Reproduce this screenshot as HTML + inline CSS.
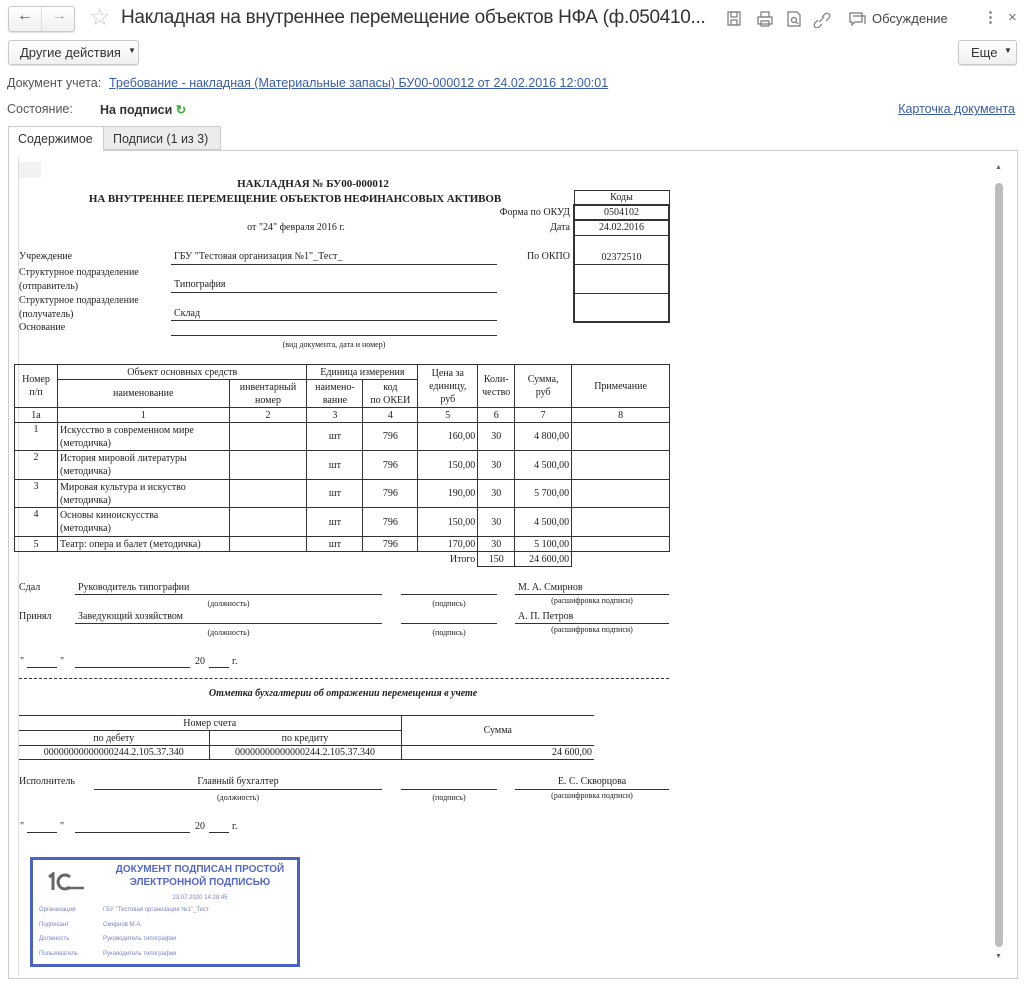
<!DOCTYPE html>
<html><head><meta charset="utf-8"><style>
*{margin:0;padding:0;box-sizing:border-box}
body{width:1024px;height:987px;background:#fff;position:relative;overflow:hidden;font-family:"Liberation Sans",sans-serif;color:#333}
.a{position:absolute;white-space:nowrap}
.s{font-family:"Liberation Serif",serif;font-size:10px;color:#222}
.l{position:absolute;height:0;border-top:1px solid #333}
.btn{position:absolute;border:1px solid #c8c8c8;border-radius:3px;background:linear-gradient(#fff,#f0f0f0);box-shadow:0 1px 1px rgba(0,0,0,.12);font-size:13px;color:#333}
table{border-collapse:collapse;position:absolute;font-family:"Liberation Serif",serif;font-size:10px;color:#222}
td{border:1px solid #333;text-align:center;vertical-align:middle;padding:0 2px;line-height:13px}
.r{text-align:right}.lf{text-align:left}
.cap{font-size:8px;text-align:center}
.st{position:absolute;font-size:6px;color:#7c86c8}
</style></head><body>
<!-- top bar -->
<div class="btn" style="left:8px;top:6px;width:67px;height:26px"></div>
<div class="a" style="left:41px;top:7px;height:24px;border-left:1px solid #ddd"></div>
<div class="a" style="left:17px;top:7px;font-size:16px;color:#555">&#8592;</div>
<div class="a" style="left:51px;top:7px;font-size:16px;color:#aaa">&#8594;</div>
<div class="a" style="left:89px;top:3px;font-size:24px;color:#ccc">&#9734;</div>
<div class="a" style="left:121px;top:7px;font-size:19px;color:#333;letter-spacing:-0.3px">Накладная на внутреннее перемещение объектов НФА (ф.050410...</div>
<svg class="a" style="left:726px;top:10px" width="150" height="18" fill="none" stroke="#777" stroke-width="1.2">
<rect x="2" y="2" width="12" height="13"/><rect x="5" y="2" width="6" height="5"/><rect x="5" y="10" width="6" height="5"/>
<rect x="32" y="7" width="14" height="7"/><rect x="35" y="2" width="8" height="5"/><rect x="35" y="11" width="8" height="5"/>
<path d="M62 2h9l3 3v11H62z"/><circle cx="68" cy="10" r="2.5"/><path d="M70 12l2 2"/>
<path d="M92 10l-3 3a2.5 2.5 0 0 0 4 4l3-3M96 7l3-3a2.5 2.5 0 0 1 4 4l-3 3M93 12l5-5"/>
<path d="M124 3h12v9h-7l-3 3v-3h-2z"/><path d="M127 6h12v8"/>
</svg>
<div class="a" style="left:872px;top:11px;font-size:13px;color:#444">Обсуждение</div>
<div class="a" style="left:983px;top:8px;font-size:15px;color:#777;font-weight:bold">&#8942;</div>
<div class="a" style="left:1008px;top:9px;font-size:15px;color:#777">×</div>
<!-- row 2 -->
<div class="btn" style="left:8px;top:40px;width:131px;height:25px"><span class="a" style="left:11px;top:4px">Другие действия</span><span class="a" style="left:119px;top:5px;font-size:8px">&#9660;</span></div>
<div class="btn" style="left:958px;top:40px;width:59px;height:25px"><span class="a" style="left:12px;top:4px">Еще</span><span class="a" style="left:45px;top:5px;font-size:8px">&#9660;</span></div>
<div class="a" style="left:7px;top:76px;font-size:12.5px;color:#555">Документ учета:</div>
<div class="a" style="left:109px;top:76px;font-size:12.5px;color:#3a5ea8;text-decoration:underline">Требование - накладная (Материальные запасы) БУ00-000012 от 24.02.2016 12:00:01</div>
<div class="a" style="left:7px;top:102px;font-size:12.5px;color:#555">Состояние:</div>
<div class="a" style="left:100px;top:102px;font-size:12.5px;color:#333;font-weight:bold">На подписи <span style="color:#3aa33a">&#8635;</span></div>
<div class="a" style="right:9px;top:102px;font-size:12.5px;color:#3a5ea8;text-decoration:underline">Карточка документа</div>
<!-- tabs -->
<div class="a" style="left:8px;top:126px;width:96px;height:25px;border:1px solid #ccc;border-bottom:none;background:#fff;z-index:2;font-size:12.5px;padding:5px 0 0 9px">Содержимое</div>
<div class="a" style="left:103px;top:126px;width:118px;height:24px;border:1px solid #ccc;background:#ececec;font-size:12.5px;padding:5px 0 0 9px">Подписи (1 из 3)</div>
<div class="a" style="left:8px;top:150px;width:1010px;height:829px;border:1px solid #ccc"></div>
<div class="a" style="left:18px;top:157px;width:1px;height:819px;background:#ddd"></div>
<div class="a" style="left:19px;top:162px;width:22px;height:16px;background:#f2f2f2"></div>
<!-- scrollbar -->
<div class="a" style="left:995px;top:183px;width:8px;height:764px;background:#bdbdbd;border-radius:4px"></div>
<div class="a" style="left:995px;top:164px;font-size:7px;color:#666">&#9650;</div>
<div class="a" style="left:995px;top:953px;font-size:7px;color:#666">&#9660;</div>

<!-- doc header -->
<div class="a s" style="left:0;width:626px;text-align:center;top:178px;font-weight:bold;font-size:11px">НАКЛАДНАЯ № БУ00-000012</div>
<div class="a s" style="left:0;width:590px;text-align:center;top:193px;font-weight:bold;font-size:11px;letter-spacing:-0.1px">НА ВНУТРЕННЕЕ ПЕРЕМЕЩЕНИЕ ОБЪЕКТОВ НЕФИНАНСОВЫХ АКТИВОВ</div>
<div class="a s" style="left:0;width:592px;text-align:center;top:222px">от "24" февраля 2016 г.</div>
<div class="a s" style="left:400px;width:170px;text-align:right;top:207px">Форма по ОКУД</div>
<div class="a s" style="left:400px;width:170px;text-align:right;top:222px">Дата</div>
<div class="a s" style="left:400px;width:170px;text-align:right;top:251px">По ОКПО</div>
<table style="left:573px;top:190px;width:97px">
<tr><td style="height:14px;border:1px solid #333">Коды</td></tr>
<tr><td style="height:15px;border:2px solid #333">0504102</td></tr>
<tr><td style="height:15px;border-left:2px solid #333;border-right:2px solid #333">24.02.2016</td></tr>
<tr><td style="height:29px;border-left:2px solid #333;border-right:2px solid #333;vertical-align:bottom">02372510</td></tr>
<tr><td style="height:29px;border-left:2px solid #333;border-right:2px solid #333"></td></tr>
<tr><td style="height:29px;border:2px solid #333;border-top:1px solid #333"></td></tr>
</table>
<div class="a s" style="left:19px;top:251px">Учреждение</div>
<div class="a s" style="left:19px;top:266px;line-height:14px">Структурное подразделение<br>(отправитель)</div>
<div class="a s" style="left:19px;top:294px;line-height:14px">Структурное подразделение<br>(получатель)</div>
<div class="a s" style="left:19px;top:322px">Основание</div>
<div class="a s" style="left:174px;top:251px">ГБУ "Тестовая организация №1"_Тест_</div>
<div class="a s" style="left:174px;top:279px">Типография</div>
<div class="a s" style="left:174px;top:308px">Склад</div>
<div class="l" style="left:171px;width:326px;top:264px"></div>
<div class="l" style="left:171px;width:326px;top:292px"></div>
<div class="l" style="left:171px;width:326px;top:320px"></div>
<div class="l" style="left:171px;width:326px;top:335px"></div>
<div class="a s" style="left:171px;width:326px;text-align:center;top:340px;font-size:8px">(вид документа, дата и номер)</div>

<table style="left:14px;top:364px;width:656px">
<col style="width:43px"><col style="width:172px"><col style="width:78px"><col style="width:56px"><col style="width:55px"><col style="width:60px"><col style="width:37px"><col style="width:57px"><col style="width:98px">
<tr style="height:15px"><td rowspan="2">Номер<br>п/п</td><td colspan="2">Объект основных средств</td><td colspan="2">Единица измерения</td><td rowspan="2">Цена за<br>единицу,<br>руб</td><td rowspan="2">Коли-<br>чество</td><td rowspan="2">Сумма,<br>руб</td><td rowspan="2">Примечание</td></tr>
<tr style="height:28px"><td>наименование</td><td>инвентарный<br>номер</td><td>наимено-<br>вание</td><td>код<br>по ОКЕИ</td></tr>
<tr style="height:15px"><td>1а</td><td>1</td><td>2</td><td>3</td><td>4</td><td>5</td><td>6</td><td>7</td><td>8</td></tr>
<tr style="height:28px"><td style="vertical-align:top">1</td><td class="lf">Искусство в современном мире<br>(методичка)</td><td></td><td>шт</td><td>796</td><td class="r">160,00</td><td>30</td><td class="r">4 800,00</td><td></td></tr>
<tr style="height:29px"><td style="vertical-align:top">2</td><td class="lf">История мировой литературы<br>(методичка)</td><td></td><td>шт</td><td>796</td><td class="r">150,00</td><td>30</td><td class="r">4 500,00</td><td></td></tr>
<tr style="height:28px"><td style="vertical-align:top">3</td><td class="lf">Мировая культура и искуство<br>(методичка)</td><td></td><td>шт</td><td>796</td><td class="r">190,00</td><td>30</td><td class="r">5 700,00</td><td></td></tr>
<tr style="height:29px"><td style="vertical-align:top">4</td><td class="lf">Основы киноискусства<br>(методичка)</td><td></td><td>шт</td><td>796</td><td class="r">150,00</td><td>30</td><td class="r">4 500,00</td><td></td></tr>
<tr style="height:15px"><td>5</td><td class="lf">Театр: опера и балет (методичка)</td><td></td><td>шт</td><td>796</td><td class="r">170,00</td><td>30</td><td class="r">5 100,00</td><td></td></tr>
<tr style="height:15px"><td colspan="6" class="r" style="border:none;border-right:1px solid #333">Итого</td><td>150</td><td class="r">24 600,00</td><td style="border:none"></td></tr>
</table>

<!-- signatures -->
<div class="a s" style="left:19px;top:582px">Сдал</div>
<div class="a s" style="left:78px;top:582px">Руководитель типографии</div>
<div class="l" style="left:75px;width:307px;top:594px"></div>
<div class="l" style="left:401px;width:96px;top:594px"></div>
<div class="a s" style="left:518px;top:582px">М. А. Смирнов</div>
<div class="l" style="left:515px;width:154px;top:594px"></div>
<div class="a s cap" style="left:75px;width:307px;top:599px">(должность)</div>
<div class="a s cap" style="left:401px;width:96px;top:599px">(подпись)</div>
<div class="a s cap" style="left:515px;width:154px;top:596px">(расшифровка подписи)</div>
<div class="a s" style="left:19px;top:611px">Принял</div>
<div class="a s" style="left:78px;top:611px">Заведующий хозяйством</div>
<div class="l" style="left:75px;width:307px;top:623px"></div>
<div class="l" style="left:401px;width:96px;top:623px"></div>
<div class="a s" style="left:518px;top:611px">А. П. Петров</div>
<div class="l" style="left:515px;width:154px;top:623px"></div>
<div class="a s cap" style="left:75px;width:307px;top:628px">(должность)</div>
<div class="a s cap" style="left:401px;width:96px;top:628px">(подпись)</div>
<div class="a s cap" style="left:515px;width:154px;top:625px">(расшифровка подписи)</div>
<div class="a s" style="left:20px;top:656px">"</div><div class="l" style="left:27px;width:30px;top:667px"></div><div class="a s" style="left:60px;top:656px">"</div>
<div class="l" style="left:75px;width:115px;top:667px"></div><div class="a s" style="left:195px;top:656px">20</div><div class="l" style="left:209px;width:20px;top:667px"></div><div class="a s" style="left:232px;top:656px">г.</div>
<div class="a" style="left:19px;top:678px;width:650px;border-top:1px dashed #333"></div>
<div class="a s" style="left:0;width:686px;text-align:center;top:688px;font-weight:bold;font-style:italic">Отметка бухгалтерии об отражении перемещения в учете</div>
<table style="left:19px;top:715px;width:575px">
<col style="width:190px"><col style="width:192px"><col style="width:193px">
<tr style="height:15px"><td colspan="2" style="border-left:none">Номер счета</td><td rowspan="2" style="border-right:none">Сумма</td></tr>
<tr style="height:15px"><td style="border-left:none">по дебету</td><td>по кредиту</td></tr>
<tr style="height:14px"><td style="border-left:none">00000000000000244.2.105.37.340</td><td>00000000000000244.2.105.37.340</td><td class="r" style="border-right:none">24 600,00</td></tr>
</table>
<div class="a s" style="left:19px;top:776px">Исполнитель</div>
<div class="a s" style="left:94px;width:288px;text-align:center;top:776px">Главный бухгалтер</div>
<div class="l" style="left:94px;width:288px;top:789px"></div>
<div class="l" style="left:401px;width:96px;top:789px"></div>
<div class="a s" style="left:515px;width:154px;text-align:center;top:776px">Е. С. Скворцова</div>
<div class="l" style="left:515px;width:154px;top:789px"></div>
<div class="a s cap" style="left:94px;width:288px;top:793px">(должность)</div>
<div class="a s cap" style="left:401px;width:96px;top:793px">(подпись)</div>
<div class="a s cap" style="left:515px;width:154px;top:791px">(расшифровка подписи)</div>
<div class="a s" style="left:20px;top:821px">"</div><div class="l" style="left:27px;width:30px;top:832px"></div><div class="a s" style="left:60px;top:821px">"</div>
<div class="l" style="left:75px;width:115px;top:832px"></div><div class="a s" style="left:195px;top:821px">20</div><div class="l" style="left:209px;width:20px;top:832px"></div><div class="a s" style="left:232px;top:821px">г.</div>

<!-- stamp -->
<div class="a" style="left:30px;top:857px;width:270px;height:110px;border:3px solid #4d63c4"></div>
<svg class="a" style="left:46px;top:872px" width="40" height="20" fill="none" stroke="#666" stroke-width="3">
<path d="M3 5l4-3v16"/><path d="M24 5a7 7 0 1 0 0 10"/><path d="M20 16h18" stroke-width="2.5"/>
</svg>
<div class="a" style="left:100px;top:863px;width:200px;text-align:center;font-size:10px;font-weight:bold;color:#5367c8;line-height:13px">ДОКУМЕНТ ПОДПИСАН ПРОСТОЙ<br>ЭЛЕКТРОННОЙ ПОДПИСЬЮ</div>
<div class="st" style="left:100px;width:200px;text-align:center;top:895px">23.07.2020 14:28:45</div>
<div class="st" style="left:39px;top:907px">Организация</div><div class="st" style="left:103px;top:907px">ГБУ "Тестовая организация №1"_Тест</div>
<div class="st" style="left:39px;top:922px">Подписант</div><div class="st" style="left:103px;top:922px">Смирнов М.А.</div>
<div class="st" style="left:39px;top:936px">Должность</div><div class="st" style="left:103px;top:936px">Руководитель типографии</div>
<div class="st" style="left:39px;top:951px">Пользователь</div><div class="st" style="left:103px;top:951px">Руководитель типографии</div>
</body></html>
